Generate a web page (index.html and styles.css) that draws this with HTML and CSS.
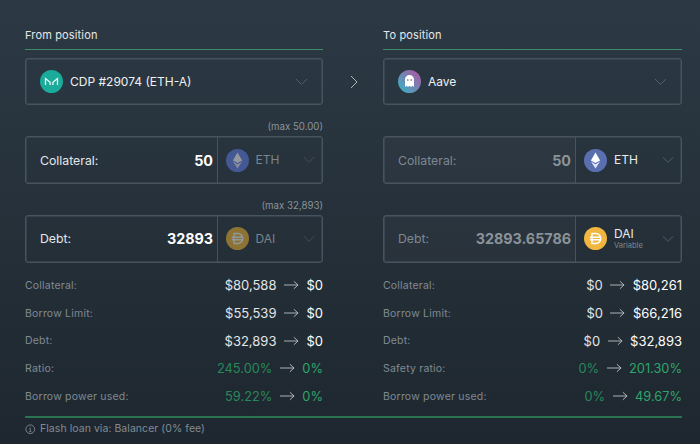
FILE: index.html
```html
<!DOCTYPE html>
<html lang="en">
<head>
<meta charset="utf-8">
<title>Shift position</title>
<link rel="stylesheet" href="styles.css">
</head>
<body>
<main class="page">
  <div class="columns">
    <section class="col">
      <h2 class="col-title">From position</h2>
      <div class="box select">
        <svg class="logo" viewBox="0 0 23 23"><circle cx="11.5" cy="11.5" r="11.5" fill="#1aab9b"/><path d="M5.5 15V8.6l4.6 3.6V15M17.5 15V8.6l-4.6 3.6V15" fill="none" stroke="#eafaf7" stroke-width="1.3"/></svg>
        <span class="select-name">CDP #29074 (ETH-A)</span>
        <svg class="chev" viewBox="0 0 14 8"><path d="M1 1l6 6 6-6"/></svg>
      </div>
      <div class="max">(max 50.00)</div>
      <div class="box field">
        <div class="amount"><span class="amount-label">Collateral:</span><span class="amount-value">50</span></div>
        <div class="asset off">
          <svg class="logo" viewBox="0 0 23 23"><circle cx="11.5" cy="11.5" r="11.5" fill="#627eea"/><path d="M11.5 3.5l-4.6 7.9 4.6 2.7 4.6-2.7z" fill="#fff"/><path d="M11.5 15.3l-4.6-2.8 4.6 6.9 4.6-6.9z" fill="#dfe4f8"/></svg>
          <span class="asset-name">ETH</span>
          <svg class="chev" viewBox="0 0 14 8"><path d="M1 1l6 6 6-6"/></svg>
        </div>
      </div>
      <div class="max">(max 32,893)</div>
      <div class="box field">
        <div class="amount"><span class="amount-label">Debt:</span><span class="amount-value">32893</span></div>
        <div class="asset off">
          <svg class="logo" viewBox="0 0 23 23"><circle cx="11.5" cy="11.5" r="11.5" fill="#f4b731"/><path d="M8 6.5h3.8a5 5 0 010 10H8zM5.8 10.2h11.4M5.8 12.8h11.4" fill="none" stroke="#fff" stroke-width="1.4"/></svg>
          <span class="asset-name">DAI</span>
          <svg class="chev" viewBox="0 0 14 8"><path d="M1 1l6 6 6-6"/></svg>
        </div>
      </div>
      <dl class="stats">
        <div class="stat"><dt>Collateral:</dt><dd><span class="soft">$80,588</span><svg class="arrow" viewBox="0 0 16 10"><path d="M0 5h15M10.5 1l4.5 4-4.5 4"/></svg><span>$0</span></dd></div>
        <div class="stat"><dt>Borrow Limit:</dt><dd><span class="soft">$55,539</span><svg class="arrow" viewBox="0 0 16 10"><path d="M0 5h15M10.5 1l4.5 4-4.5 4"/></svg><span>$0</span></dd></div>
        <div class="stat"><dt>Debt:</dt><dd><span class="soft">$32,893</span><svg class="arrow" viewBox="0 0 16 10"><path d="M0 5h15M10.5 1l4.5 4-4.5 4"/></svg><span>$0</span></dd></div>
        <div class="stat"><dt>Ratio:</dt><dd class="green"><span class="dim">245.00%</span><svg class="arrow" viewBox="0 0 16 10"><path d="M0 5h15M10.5 1l4.5 4-4.5 4"/></svg><span>0%</span></dd></div>
        <div class="stat"><dt>Borrow power used:</dt><dd class="green"><span class="dim">59.22%</span><svg class="arrow" viewBox="0 0 16 10"><path d="M0 5h15M10.5 1l4.5 4-4.5 4"/></svg><span>0%</span></dd></div>
      </dl>
    </section>

    <div class="gutter">
      <svg class="next" viewBox="0 0 8 14"><path d="M1 1l6 6-6 6"/></svg>
    </div>

    <section class="col">
      <h2 class="col-title">To position</h2>
      <div class="box select">
        <svg class="logo" viewBox="0 0 23 23"><defs><linearGradient id="aave" x1="0" y1="1" x2="1" y2="0"><stop offset="0" stop-color="#2ebac6"/><stop offset="1" stop-color="#b6509e"/></linearGradient></defs><circle cx="11.5" cy="11.5" r="11.5" fill="url(#aave)"/><path d="M7 17V9.5a4.5 4.5 0 019 0V17l-1.5-1.2L13 17l-1.5-1.2L10 17l-1.5-1.2z" fill="#fff"/><circle cx="9.8" cy="10" r=".8" fill="#555"/><circle cx="13.2" cy="10" r=".8" fill="#555"/></svg>
        <span class="select-name">Aave</span>
        <svg class="chev" viewBox="0 0 14 8"><path d="M1 1l6 6 6-6"/></svg>
      </div>
      <div class="max"></div>
      <div class="box field locked">
        <div class="amount"><span class="amount-label">Collateral:</span><span class="amount-value">50</span></div>
        <div class="asset">
          <svg class="logo" viewBox="0 0 23 23"><circle cx="11.5" cy="11.5" r="11.5" fill="#5a6fb0"/><path d="M11.5 3.5l-4.6 7.9 4.6 2.7 4.6-2.7z" fill="#fff"/><path d="M11.5 15.3l-4.6-2.8 4.6 6.9 4.6-6.9z" fill="#dfe4f8"/></svg>
          <span class="asset-name">ETH</span>
          <svg class="chev" viewBox="0 0 14 8"><path d="M1 1l6 6 6-6"/></svg>
        </div>
      </div>
      <div class="max"></div>
      <div class="box field locked">
        <div class="amount"><span class="amount-label">Debt:</span><span class="amount-value">32893.65786</span></div>
        <div class="asset">
          <svg class="logo" viewBox="0 0 23 23"><circle cx="11.5" cy="11.5" r="11.5" fill="#f0b63f"/><path d="M8 6.5h3.8a5 5 0 010 10H8zM5.8 10.2h11.4M5.8 12.8h11.4" fill="none" stroke="#fff" stroke-width="1.4"/></svg>
          <span class="asset-text"><span class="asset-name">DAI</span><span class="asset-sub">Variable</span></span>
          <svg class="chev" viewBox="0 0 14 8"><path d="M1 1l6 6 6-6"/></svg>
        </div>
      </div>
      <dl class="stats">
        <div class="stat"><dt>Collateral:</dt><dd><span class="soft">$0</span><svg class="arrow" viewBox="0 0 16 10"><path d="M0 5h15M10.5 1l4.5 4-4.5 4"/></svg><span>$80,261</span></dd></div>
        <div class="stat"><dt>Borrow Limit:</dt><dd><span class="soft">$0</span><svg class="arrow" viewBox="0 0 16 10"><path d="M0 5h15M10.5 1l4.5 4-4.5 4"/></svg><span>$66,216</span></dd></div>
        <div class="stat"><dt>Debt:</dt><dd><span class="soft">$0</span><svg class="arrow" viewBox="0 0 16 10"><path d="M0 5h15M10.5 1l4.5 4-4.5 4"/></svg><span>$32,893</span></dd></div>
        <div class="stat"><dt>Safety ratio:</dt><dd class="green"><span class="dim">0%</span><svg class="arrow" viewBox="0 0 16 10"><path d="M0 5h15M10.5 1l4.5 4-4.5 4"/></svg><span>201.30%</span></dd></div>
        <div class="stat"><dt>Borrow power used:</dt><dd class="green"><span class="dim">0%</span><svg class="arrow" viewBox="0 0 16 10"><path d="M0 5h15M10.5 1l4.5 4-4.5 4"/></svg><span>49.67%</span></dd></div>
      </dl>
    </section>
  </div>
  <footer class="foot">
    <svg class="info" viewBox="0 0 12 12"><circle cx="6" cy="6" r="5"/><path d="M5 5.3h1.1v3.4M4.8 8.8h2.5M6 3v1"/></svg>
    <span>Flash loan via: Balancer (0% fee)</span>
  </footer>
</main>
</body>
</html>
```

FILE: styles.css
```css
* { box-sizing: border-box; }
html, body { margin: 0; height: 100%; }
body {
  width: 700px;
  height: 444px;
  overflow: hidden;
  background: linear-gradient(180deg, #2c3944 0%, #1e272f 100%);
  font-family: Inter, "Liberation Sans", sans-serif;
  color: #fff;
}
.page { padding: 28px 18px 0 25px; }
.columns { display: grid; grid-template-columns: 298px 60px 299px; }
.col { min-width: 0; }
.col-title {
  margin: 0;
  height: 22px;
  padding-top: 1px;
  border-bottom: 1px solid #3f8a68;
  font-size: 11px;
  line-height: 13px;
  font-weight: 400;
  letter-spacing: .15px;
  color: #e4e7ea;
}
.box {
  display: flex;
  align-items: center;
  border: 1px solid #47535f;
  border-radius: 3px;
  box-shadow: 0 0 0 .5px #47535f inset;
}
.select { height: 47px; margin-top: 8px; padding: 0 14px; }
.select-name { flex: 1; margin-left: 7px; font-size: 12px; font-weight: 400; color: #eef0f2; }
.logo { width: 23px; height: 23px; flex: none; }
.chev { width: 13px; height: 7.5px; flex: none; }
.chev path { fill: none; stroke: #566470; stroke-width: 1; }
.max {
  height: 31.25px;
  padding-top: 16px;
  text-align: right;
  font-size: 9.7px;
  line-height: 12px;
  color: #8a949c;
}
.field { height: 47.5px; align-items: stretch; }
.amount {
  flex: 1;
  min-width: 0;
  display: flex;
  align-items: center;
  justify-content: space-between;
  padding: 0 4px 0 14px;
  border-right: 1px solid #47535f;
}
.amount-label { font-size: 12.3px; font-weight: 400; color: #e4e7ea; }
.amount-value { font-size: 14.3px; font-weight: 700; color: #fff; }
.locked .amount { background: rgba(255, 255, 255, .025); }
.locked .amount-label { color: #7e8890; }
.locked .amount-value { color: #8b9399; }
.asset { width: 105px; flex: none; display: flex; align-items: center; padding: 0 7px 0 7.5px; gap: 7.5px; }
.asset .chev { width: 12px; margin-left: auto; }
.asset-name { font-size: 12px; font-weight: 400; color: #e8eaec; display: block; line-height: 14px; }
.asset-sub { font-size: 7.5px; color: #7e8890; display: block; line-height: 10px; }
.off { width: 104px; gap: 7px; }
.off .logo { opacity: .5; }
.off .asset-name { color: #7a858e; }
.off .chev path { stroke: #47535f; }
.stats { margin: 9px 0 0; }
.stat { display: flex; justify-content: space-between; align-items: center; height: 27.7px; }
.stat dt { font-size: 10.5px; color: #7f8a93; letter-spacing: .2px; }
.stat dd { margin: 0; display: flex; align-items: center; gap: 6.5px; font-size: 13px; color: #fff; }
.soft { color: #e2e5e8; }
.stat .green { color: #2ea56b; font-size: 12.8px; }
.dim { color: #27885a; }
.arrow { width: 15px; height: 10px; flex: none; margin: 0 1px; }
.arrow path { fill: none; stroke: #b4babf; stroke-width: 1; }
.next { width: 8px; height: 14px; display: block; }
.next path { fill: none; stroke: #aeb5bb; stroke-width: 1; }
.gutter { display: flex; justify-content: center; height: 100px; padding: 47px 0 0 1px; }
.foot {
  margin-top: 6px;
  height: 24px;
  border-top: 2px solid #2a7350;
  display: flex;
  align-items: center;
  gap: 4.5px;
  font-size: 10.5px;
  letter-spacing: .05px;
  color: #818b93;
}
.info { width: 10.5px; height: 10.5px; flex: none; }
.info circle, .info path { fill: none; stroke: #818b93; stroke-width: 1; }
```
